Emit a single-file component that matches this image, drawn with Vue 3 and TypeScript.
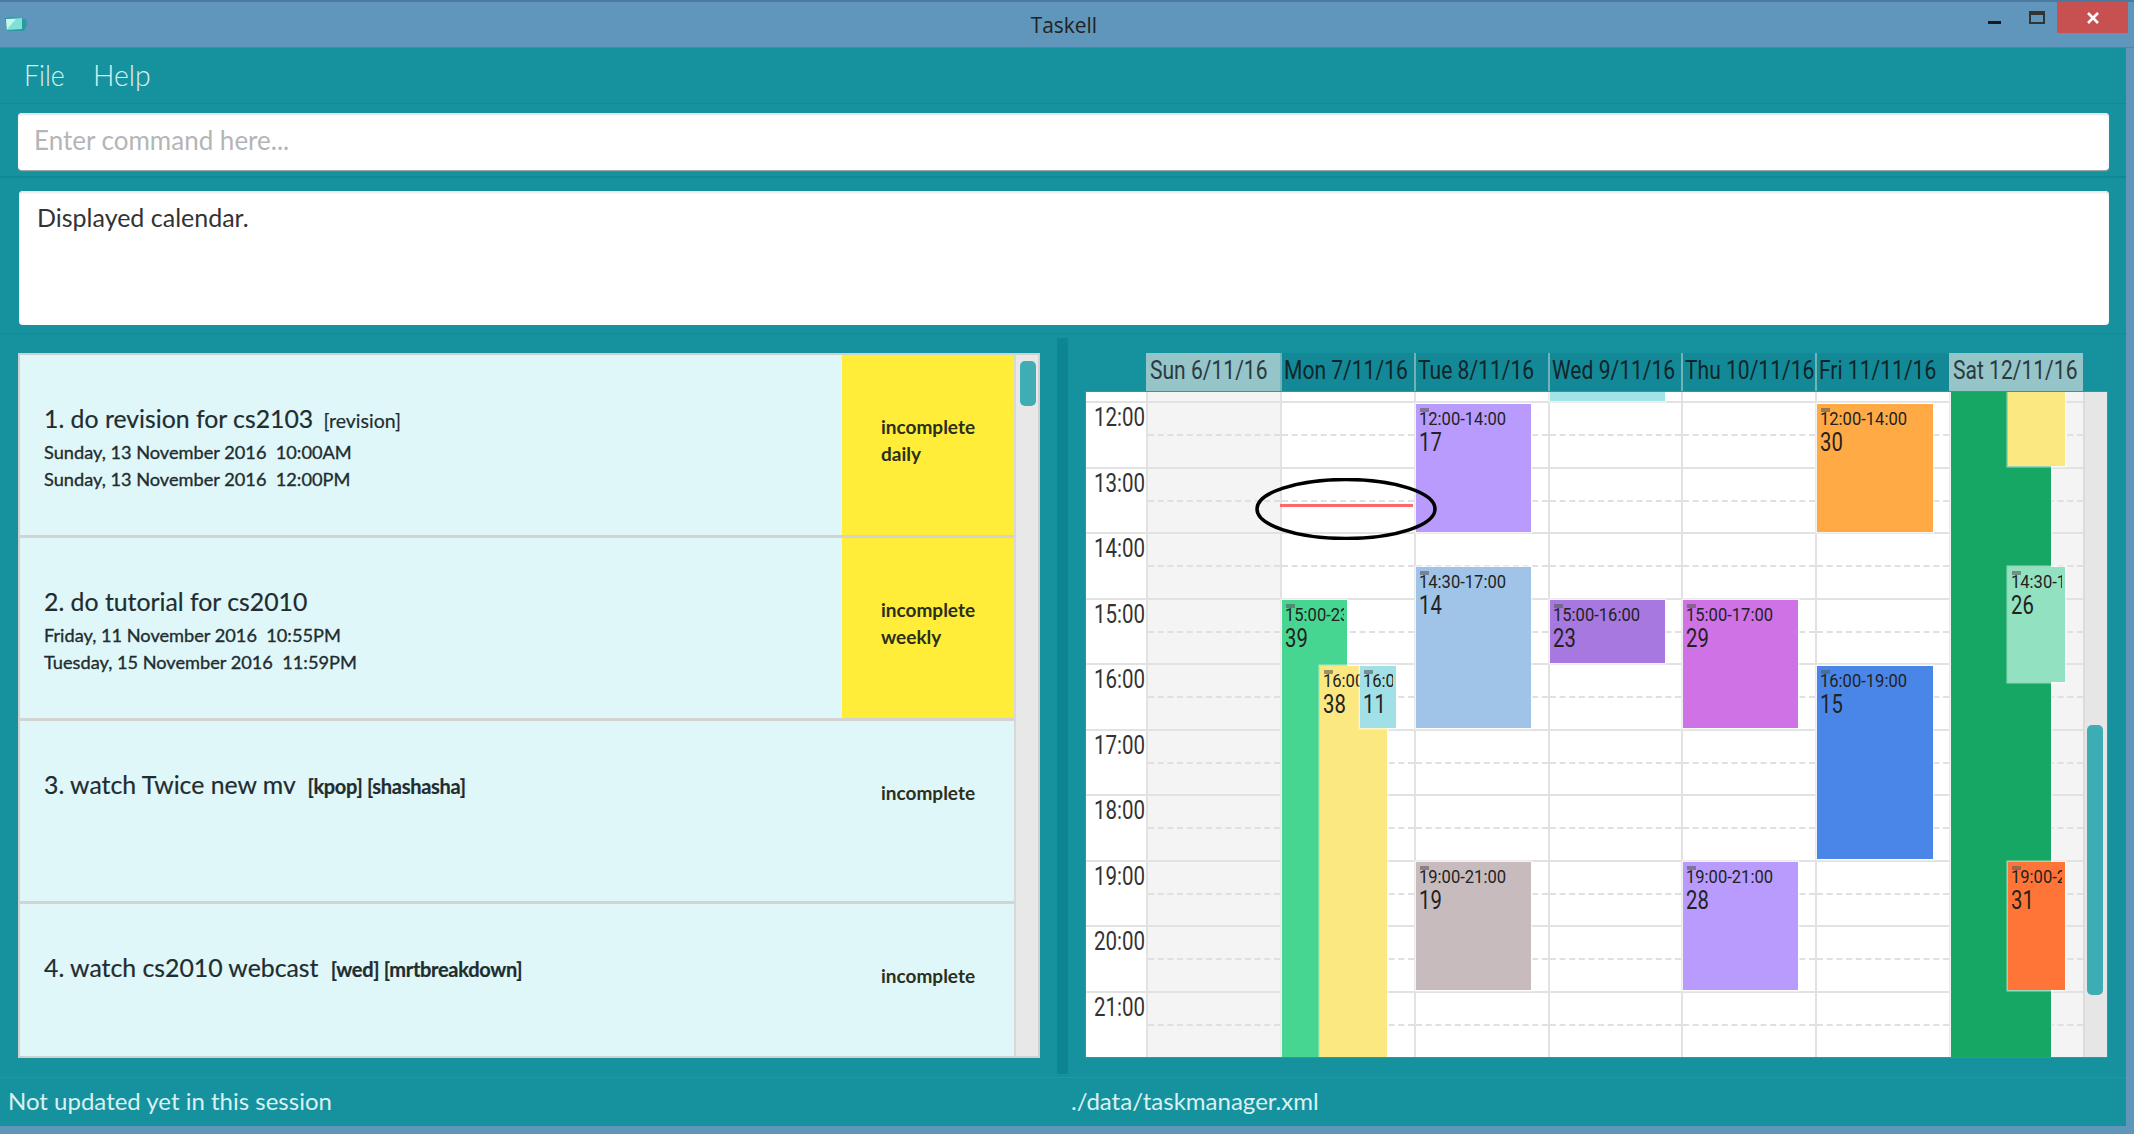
<template>
  <div class="window">
    <header class="titlebar">
      <svg class="app-icon" viewBox="0 0 24 16" width="24" height="16">
        <path d="M1 2 L9 1 L22 3 L23 8 L20 15 L3 15 Z" fill="#2a9aa0" />
        <path d="M2 3 L18 2 L18 13 L3 14 Z" fill="#7fe0d8" />
        <path d="M2 3 L12 3 L4 12 L3 14 Z" fill="#c8f4ee" />
      </svg>
      <span class="app-title">Taskell</span>
      <div class="win-buttons">
        <span class="win-min"></span>
        <span class="win-max"></span>
        <span class="win-close">
          <svg viewBox="0 0 14 14" width="14" height="14">
            <path d="M2 2 L12 12 M12 2 L2 12" stroke="#fff" stroke-width="2.6" fill="none" />
          </svg>
        </span>
      </div>
    </header>

    <div class="content">
      <nav class="menubar">
        <span class="menu-item">File</span>
        <span class="menu-item help">Help</span>
      </nav>

      <section class="command-section">
        <input class="command" placeholder="Enter command here..." />
      </section>

      <section class="result-section">
        <div class="result">Displayed calendar.</div>
      </section>

      <div class="split">
        <div class="left-pane">
          <div class="list">
            <div class="rows">
              <div v-for="task in tasks" :key="task.index" class="row">
                <div class="row-main">
                  <div class="row-title">
                    {{ task.index }}. {{ task.name }}
                    <span class="tags" :class="{ blurred: task.blurred }">{{ task.tags }}</span>
                  </div>
                  <div v-for="d in task.dates" :key="d" class="row-date">{{ d }}</div>
                </div>
                <div class="row-status" :class="{ flagged: task.repeat }">
                  <div>incomplete</div>
                  <div v-if="task.repeat">{{ task.repeat }}</div>
                </div>
              </div>
            </div>
            <div class="list-scroll"><div class="list-thumb"></div></div>
          </div>
        </div>

        <div class="divider"></div>

        <div class="right-pane">
          <div class="cal-head">
            <div v-for="day in days" :key="day.label" class="head-cell" :class="{ weekend: day.weekend }">
              <span class="squeeze">{{ day.label }}</span>
            </div>
          </div>
          <div class="cal-box">
            <div class="time-col">
              <div class="spacer"></div>
              <div v-for="h in hours" :key="h" class="time-cell"><span class="squeeze">{{ h }}:00</span></div>
            </div>
            <div v-for="day in days" :key="day.label" class="day-col" :class="{ weekend: day.weekend }">
              <div class="spacer"></div>
              <div v-for="h in hours" :key="h" class="hour-cell"></div>
              <div v-for="ev in day.events" :key="ev.num" class="event" :style="eventStyle(ev)">
                <template v-if="ev.time">
                  <i class="marker"></i>
                  <div class="ev-time"><span class="squeeze">{{ ev.time }}</span></div>
                  <div class="ev-num"><span class="squeeze">{{ ev.num }}</span></div>
                </template>
              </div>
            </div>
            <div class="cal-scroll"><div class="cal-thumb"></div></div>
            <div class="now-line"></div>
            <svg class="oval" viewBox="0 0 182 62" width="182" height="62">
              <ellipse cx="91" cy="31" rx="89" ry="29.5" fill="none" stroke="#000" stroke-width="3.5" />
            </svg>
          </div>
        </div>
      </div>

      <footer class="statusbar">
        <span class="status-left">Not updated yet in this session</span>
        <span class="status-right">./data/taskmanager.xml</span>
      </footer>
    </div>
  </div>
</template>

<script setup lang="ts">
interface CalEvent {
  num: number
  time: string
  start: number
  end: number
  left: number
  width: number
  color: string
  z?: number
}

interface Day {
  label: string
  weekend?: boolean
  events: CalEvent[]
}

const HOUR = 65.5

const hours = [12, 13, 14, 15, 16, 17, 18, 19, 20, 21]

const tasks = [
  {
    index: 1,
    name: 'do revision for cs2103',
    tags: '[revision]',
    dates: ['Sunday, 13 November 2016  10:00AM', 'Sunday, 13 November 2016  12:00PM'],
    repeat: 'daily',
    blurred: false,
  },
  {
    index: 2,
    name: 'do tutorial for cs2010',
    tags: '',
    dates: ['Friday, 11 November 2016  10:55PM', 'Tuesday, 15 November 2016  11:59PM'],
    repeat: 'weekly',
    blurred: false,
  },
  { index: 3, name: 'watch Twice new mv', tags: '[kpop] [shashasha]', dates: [], repeat: '', blurred: true },
  { index: 4, name: 'watch cs2010 webcast', tags: '[wed] [mrtbreakdown]', dates: [], repeat: '', blurred: true },
]

const days: Day[] = [
  { label: 'Sun 6/11/16', weekend: true, events: [] },
  {
    label: 'Mon 7/11/16',
    events: [
      { num: 39, time: '15:00-23:59', start: 15, end: 23, left: 0.5, width: 65, color: '#47d691' },
      { num: 38, time: '16:00-23:59', start: 16, end: 23, left: 38, width: 67, color: '#fbe881', z: 2 },
      { num: 11, time: '16:00-17:00', start: 16, end: 17, left: 78, width: 36, color: '#a0e0e6', z: 3 },
    ],
  },
  {
    label: 'Tue 8/11/16',
    events: [
      { num: 17, time: '12:00-14:00', start: 12, end: 14, left: 0, width: 115, color: '#b89bfd' },
      { num: 14, time: '14:30-17:00', start: 14.5, end: 17, left: 0, width: 115, color: '#9fc4e7' },
      { num: 19, time: '19:00-21:00', start: 19, end: 21, left: 0, width: 115, color: '#c8bbbd' },
    ],
  },
  {
    label: 'Wed 9/11/16',
    events: [
      { num: 40, time: '', start: 11, end: 12, left: 0, width: 115, color: '#a2e3e8' },
      { num: 23, time: '15:00-16:00', start: 15, end: 16, left: 0, width: 115, color: '#a678e0' },
    ],
  },
  {
    label: 'Thu 10/11/16',
    events: [
      { num: 29, time: '15:00-17:00', start: 15, end: 17, left: 0, width: 115, color: '#ce72e6' },
      { num: 28, time: '19:00-21:00', start: 19, end: 21, left: 0, width: 115, color: '#b89bfd' },
    ],
  },
  {
    label: 'Fri 11/11/16',
    events: [
      { num: 30, time: '12:00-14:00', start: 12, end: 14, left: 0, width: 116, color: '#ffaa45' },
      { num: 15, time: '16:00-19:00', start: 16, end: 19, left: 0, width: 116, color: '#4a86e8' },
    ],
  },
  {
    label: 'Sat 12/11/16',
    weekend: true,
    events: [
      { num: 1, time: '', start: 10, end: 23, left: 0, width: 100, color: '#16a765' },
      { num: 2, time: '', start: 11, end: 13, left: 57, width: 57, color: '#fbe881', z: 2 },
      { num: 26, time: '14:30-16:15', start: 14.5, end: 16.3, left: 57, width: 57, color: '#92e1c0', z: 2 },
      { num: 31, time: '19:00-21:00', start: 19, end: 21, left: 57, width: 57, color: '#ff7537', z: 2 },
    ],
  },
]

function eventStyle(ev: CalEvent) {
  return {
    top: `${11.5 + (ev.start - 12) * HOUR}px`,
    height: `${(ev.end - ev.start) * HOUR - 3}px`,
    left: `${ev.left}px`,
    width: `${ev.width}px`,
    background: ev.color,
    zIndex: ev.z ?? 1,
  }
}
</script>

<style>
html,
body {
  margin: 0;
  background: #6096bb;
}
</style>

<style scoped>
.window {
  width: 2134px;
  height: 1134px;
  background: #6096bb;
  border-top: 2px solid #4b7a9c;
  box-sizing: border-box;
  overflow: hidden;
  font-family: Lato, "Open Sans", sans-serif;
  color: #1f2d30;
}

.titlebar {
  height: 46px;
  position: relative;
  display: flex;
  align-items: center;
  justify-content: center;
  border-bottom: 1px solid #55859f;
  box-sizing: border-box;
}

.app-icon {
  position: absolute;
  left: 4px;
  top: 14px;
}

.app-title {
  font-family: "Open Sans", sans-serif;
  font-size: 22px;
  color: #222;
  transform: translateX(-3px) scaleX(0.95);
  margin-top: -1px;
}

.win-buttons {
  position: absolute;
  top: 0;
  left: 1988px;
  right: 6px;
  height: 31px;
}

.win-min {
  position: absolute;
  left: 0;
  top: 19px;
  width: 13px;
  height: 3px;
  background: #1a1a1a;
}

.win-max {
  position: absolute;
  left: 41px;
  top: 9px;
  width: 16px;
  height: 13px;
  border: 2px solid #333;
  border-top-width: 4px;
  box-sizing: border-box;
}

.win-close {
  position: absolute;
  left: 69px;
  top: 0;
  width: 71px;
  height: 31px;
  background: #c75050;
  display: flex;
  align-items: center;
  justify-content: center;
}

.content {
  width: 2126px;
  height: 1078px;
  background: #16929f;
  display: flex;
  flex-direction: column;
}

.menubar {
  height: 56px;
  display: flex;
  align-items: center;
  padding: 0 0 2px 24px;
  box-sizing: border-box;
  border-bottom: 1px solid #12899a;
  color: #d9f0ef;
  font-size: 29px;
  font-weight: 300;
}

.menu-item {
  display: inline-block;
  transform: scaleX(0.92);
  transform-origin: left;
}

.help {
  margin-left: 25px;
  transform: scaleX(0.98);
}

.command-section {
  height: 74px;
  padding: 9px 18px 0;
  box-sizing: border-box;
  border-bottom: 2px solid #0f8896;
}

.command {
  display: block;
  width: 2091px;
  height: 57px;
  border: none;
  border-radius: 4px;
  box-shadow: inset 0 2px 2px #e2e2e2, 0 1px 1px #aaa;
  background: #fff;
  padding: 0 16px 3px;
  box-sizing: border-box;
  font-family: inherit;
  font-size: 26px;
  outline: none;
}

.command::placeholder {
  color: #b5b5b5;
}

.result-section {
  height: 156px;
  padding: 13px 18px 0 19px;
  box-sizing: border-box;
  border-bottom: 1px solid #128a98;
}

.result {
  height: 134px;
  width: 2090px;
  background: #fff;
  border-radius: 4px;
  box-shadow: inset 0 2px 2px #e8e8e8;
  padding: 11px 18px;
  box-sizing: border-box;
  font-size: 25px;
  line-height: 30px;
  color: #333;
}

.split {
  height: 743px;
  display: flex;
}

.left-pane {
  width: 1057px;
  padding: 19px 17px 0 18px;
  box-sizing: border-box;
}

.list {
  height: 705px;
  display: flex;
  border: 2px solid #d0d0d0;
  box-sizing: border-box;
  background: #dff7f9;
}

.rows {
  width: 994px;
  overflow: hidden;
}

.row {
  height: 183px;
  box-sizing: border-box;
  display: flex;
  background: #dff7f9;
  border-bottom: 3px solid #d3d3d3;
}

.row-main {
  flex: 1;
  padding: 49px 0 0 24px;
}

.row-title {
  font-size: 24.8px;
  line-height: 30px;
  margin-bottom: 3px;
  white-space: nowrap;
  -webkit-text-stroke: 0.2px #1f2d30;
}

.tags {
  font-size: 19.5px;
  margin-left: 4px;
}

.tags.blurred {
  font-weight: 700;
  font-size: 20px;
  letter-spacing: -0.3px;
  margin-left: 6px;
}

.row-date {
  font-size: 18.2px;
  line-height: 27px;
  white-space: pre;
  -webkit-text-stroke: 0.35px #1f2d30;
}

.row-status {
  width: 172px;
  padding: 58px 0 0 39px;
  box-sizing: border-box;
  font-size: 19px;
  line-height: 27px;
  font-weight: 700;
  color: #2b2f1c;
}

.row-status.flagged {
  background: #ffed39;
}

.list-scroll {
  width: 24px;
  background: #e8e8e8;
  border-left: 2px solid #d8d8d8;
  box-sizing: border-box;
  padding: 6px 0 0 4px;
}

.list-thumb {
  width: 16px;
  height: 45px;
  background: #40adb5;
  border-radius: 5px;
}

.divider {
  width: 11px;
  background: #0e8592;
  margin: 4px 0 3px;
}

.right-pane {
  flex: 1;
  padding: 19px 18px 0 17px;
  box-sizing: border-box;
}

.cal-head {
  height: 38px;
  display: flex;
  margin-left: 61px;
  width: 937px;
  background: #138997;
}

.head-cell {
  flex: 1;
  min-width: 0;
  overflow: hidden;
  white-space: nowrap;
  border-left: 2px solid #72b3ba;
  font-family: Roboto, sans-serif;
  font-size: 26px;
  line-height: 35px;
  padding-left: 2px;
  box-sizing: border-box;
  color: #10262a;
}

.head-cell.weekend {
  background: #95c4c9;
  border-left-color: #95c4c9;
  color: #2a3b3e;
}

.squeeze {
  display: inline-block;
  white-space: pre;
  transform-origin: left;
  transform: scaleX(0.81);
}

.cal-box {
  position: relative;
  height: 667px;
  border: 1px solid #0aa0d8;
  box-sizing: border-box;
  background: #fff;
  display: flex;
  overflow: hidden;
}

.spacer {
  height: 9px;
}

.time-col {
  width: 60px;
  flex: none;
}

.time-cell {
  height: 65.5px;
  box-sizing: border-box;
  border-top: 2px solid #e2e2e2;
  font-family: Roboto, sans-serif;
  font-size: 25px;
  line-height: 29px;
  padding-left: 8px;
  color: #333;
  white-space: nowrap;
}

.time-cell .squeeze {
  transform: scaleX(0.82);
}

.day-col {
  position: relative;
  flex: none;
  width: 133.86px;
  box-sizing: border-box;
  border-left: 2px solid #e2e2e2;
}

.day-col.weekend {
  background: #f4f4f4;
}

.hour-cell {
  position: relative;
  height: 65.5px;
  box-sizing: border-box;
  border-top: 2px solid #e2e2e2;
}

.hour-cell::after {
  content: "";
  position: absolute;
  left: 0;
  right: 0;
  top: 31px;
  border-top: 2px dashed #e0e0e0;
}

.event {
  position: absolute;
  box-shadow: 0 0 0 1.5px rgba(255, 255, 255, 0.55);
  font-family: Roboto, sans-serif;
  color: #222;
  white-space: nowrap;
  padding: 0 3px;
  box-sizing: border-box;
}

.marker {
  position: absolute;
  left: 4px;
  top: 4px;
  width: 9px;
  height: 4px;
  background: rgba(90, 90, 90, 0.6);
}

.ev-time {
  padding-top: 6px;
  font-size: 18px;
  line-height: 18px;
  overflow: hidden;
}

.ev-time .squeeze {
  transform: scaleX(0.92);
}

.ev-num {
  margin-top: 1px;
  font-size: 25px;
  line-height: 28px;
  overflow: hidden;
}

.cal-scroll {
  flex: 1;
  position: relative;
  background: #e6e6e6;
  border-left: 2px solid #dcdcdc;
  box-sizing: border-box;
}

.cal-thumb {
  position: absolute;
  left: 2px;
  top: 333px;
  width: 16px;
  height: 270px;
  border-radius: 5px;
  background: #3eacb4;
}

.now-line {
  position: absolute;
  left: 194px;
  top: 112px;
  width: 133px;
  height: 3px;
  background: #fb6a6a;
  z-index: 4;
}

.oval {
  position: absolute;
  left: 169px;
  top: 86px;
  z-index: 5;
}

.statusbar {
  height: 48px;
  display: flex;
  align-items: center;
  padding-bottom: 3px;
  color: #d9f1f0;
  font-size: 24px;
  border-top: 1px solid #1a9aa6;
  box-sizing: border-box;
}

.status-left {
  width: 1071px;
  padding-left: 8px;
  box-sizing: border-box;
}
</style>
